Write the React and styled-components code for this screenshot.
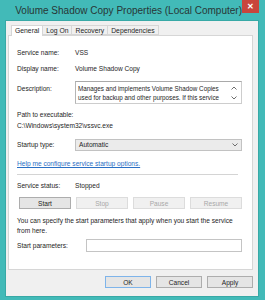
import React from "react";
import styled, { createGlobalStyle } from "styled-components";

const GlobalStyle = createGlobalStyle`
  html, body {
    margin: 0;
    padding: 0;
    background: #42bab8;
  }
  body {
    font-family: "Liberation Sans", Arial, sans-serif;
    font-size: 6.6px;
    color: #1e1e1e;
  }
`;

const Window = styled.div`
  width: 265px;
  height: 300px;
  display: flex;
  flex-direction: column;
  background: #42bab8;
  box-sizing: border-box;
`;

const TitleBar = styled.div`
  height: 21px;
  display: grid;
  grid-template-columns: 1fr auto 1fr;
  align-items: start;
  flex-shrink: 0;
`;

const Title = styled.div`
  grid-column: 2;
  font-size: 10px;
  color: #283636;
  line-height: 21px;
  white-space: nowrap;
`;

const CloseButton = styled.div`
  grid-column: 3;
  justify-self: end;
  margin-right: 6px;
  width: 17px;
  height: 13px;
  background: #c9453c;
  color: #fff;
  display: flex;
  align-items: center;
  justify-content: center;
  font-size: 8px;
  font-weight: bold;
`;

const Client = styled.div`
  flex: 1;
  margin: 0 7px 4px 6px;
  background: #f0f0f0;
  padding: 3px 5px 0 2px;
  display: flex;
  flex-direction: column;
  box-shadow: 0 0 0 1px #38a9a6;
`;

const TabStrip = styled.div`
  display: flex;
  padding-left: 3px;
  height: 11px;
  align-items: flex-end;
`;

const Tab = styled.div`
  height: ${(p) => (p.$active ? 11 : 10)}px;
  box-sizing: border-box;
  padding: 0 3px;
  border: 1px solid #d6d6d6;
  border-bottom: ${(p) => (p.$active ? "none" : "1px solid #d6d6d6")};
  margin-left: ${(p) => (p.$active ? 0 : -1)}px;
  background: ${(p) => (p.$active ? "#fff" : "#f0f0f0")};
  line-height: 9px;
  font-size: 6.8px;
  position: relative;
  z-index: ${(p) => (p.$active ? 1 : 0)};
  margin-bottom: ${(p) => (p.$active ? -1 : 0)}px;
`;

const Panel = styled.div`
  height: 235px;
  box-sizing: border-box;
  background: #fff;
  border: 1px solid #d6d6d6;
  padding: 13px 10px 0 8px;
  display: flex;
  flex-direction: column;
`;

const Row = styled.div`
  display: grid;
  grid-template-columns: ${(p) => p.$label || 58}px 1fr;
  align-items: ${(p) => p.$align || "center"};
  margin-top: ${(p) => p.$gap || 0}px;
  line-height: 8px;
`;

const TopLabel = styled.span`
  padding-top: 4px;
`;

const Line = styled.div`
  line-height: ${(p) => p.$lh || 8}px;
  margin-top: ${(p) => p.$gap || 0}px;
  white-space: nowrap;
`;

const TextArea = styled.div`
  height: 23px;
  box-sizing: border-box;
  border: 1px solid #cdcdcd;
  border-top-color: #a9a9a9;
  border-left-color: #b5b5b5;
  display: flex;
  padding: 2px 2px 0 2px;
`;

const TextAreaBody = styled.div`
  flex: 1;
  font-size: 6.3px;
  line-height: 9px;
  white-space: nowrap;
`;

const ScrollArrows = styled.div`
  width: 10px;
  display: flex;
  flex-direction: column;
  align-items: center;
  justify-content: space-between;
  padding: 2px 0 3px;
`;

const Combo = styled.div`
  height: 12px;
  box-sizing: border-box;
  border: 1px solid #c2c2c2;
  background: #ebebeb;
  display: flex;
  align-items: center;
  justify-content: space-between;
  padding: 0 3px 0 3px;
`;

const Link = styled.div`
  color: #2a6fc4;
  text-decoration: underline;
  line-height: 8px;
  margin-top: 9px;
`;

const Separator = styled.div`
  height: 1px;
  background: #d4d4d4;
  margin: 6px 4px 0 0;
`;

const ButtonRow = styled.div`
  display: flex;
  justify-content: space-between;
  margin-top: ${(p) => p.$gap || 0}px;
  padding: ${(p) => p.$pad || "0"};
`;

const Button = styled.div`
  width: ${(p) => p.$w || 52}px;
  height: 12px;
  box-sizing: border-box;
  border: 1px solid ${(p) => (p.$disabled ? "#dcdcdc" : p.$primary ? "#7eb4ea" : "#adadad")};
  background: ${(p) => (p.$disabled ? "#f0f0f0" : "#e5e5e5")};
  color: ${(p) => (p.$disabled ? "#a8a8a8" : "#1e1e1e")};
  display: flex;
  align-items: center;
  justify-content: center;
`;

const Input = styled.div`
  height: 13px;
  box-sizing: border-box;
  border: 1px solid #c4c4c4;
  background: #fff;
`;

const Footer = styled.div`
  display: flex;
  justify-content: flex-end;
  gap: 5px;
  padding-top: 6px;
`;

const Chevron = ({ up }) => (
  <svg width="6" height="4" viewBox="0 0 6 4">
    <path
      d={up ? "M0.5 3.5 L3 1 L5.5 3.5" : "M0.5 0.5 L3 3 L5.5 0.5"}
      fill="none"
      stroke="#6d6d6d"
      strokeWidth="1"
    />
  </svg>
);

export default function App() {
  return (
    <>
      <GlobalStyle />
      <Window>
        <TitleBar>
          <Title>Volume Shadow Copy Properties (Local Computer)</Title>
          <CloseButton>✕</CloseButton>
        </TitleBar>
        <Client>
          <TabStrip>
            <Tab $active>General</Tab>
            <Tab>Log On</Tab>
            <Tab>Recovery</Tab>
            <Tab>Dependencies</Tab>
          </TabStrip>
          <Panel>
            <Row>
              <span>Service name:</span>
              <span>VSS</span>
            </Row>
            <Row $gap={8}>
              <span>Display name:</span>
              <span>Volume Shadow Copy</span>
            </Row>
            <Row $gap={8} $align="start">
              <TopLabel>Description:</TopLabel>
              <TextArea>
                <TextAreaBody>
                  Manages and implements Volume Shadow Copies
                  <br />
                  used for backup and other purposes. If this service
                </TextAreaBody>
                <ScrollArrows>
                  <Chevron up />
                  <Chevron />
                </ScrollArrows>
              </TextArea>
            </Row>
            <Line $gap={7}>Path to executable:</Line>
            <Line $gap={3}>C:\Windows\system32\vssvc.exe</Line>
            <Row $gap={9}>
              <span>Startup type:</span>
              <Combo>
                <span>Automatic</span>
                <Chevron />
              </Combo>
            </Row>
            <Link>Help me configure service startup options.</Link>
            <Separator />
            <Row $gap={7}>
              <span>Service status:</span>
              <span>Stopped</span>
            </Row>
            <ButtonRow $gap={7} $pad="0 0 0 2px">
              <Button>Start</Button>
              <Button $disabled>Stop</Button>
              <Button $disabled>Pause</Button>
              <Button $disabled>Resume</Button>
            </ButtonRow>
            <Line $gap={7} $lh={10}>
              You can specify the start parameters that apply when you start the service
            </Line>
            <Line $lh={9}>from here.</Line>
            <Row $gap={4} $label={69}>
              <span>Start parameters:</span>
              <Input />
            </Row>
          </Panel>
          <Footer>
            <Button $w={46} $primary>OK</Button>
            <Button $w={46}>Cancel</Button>
            <Button $w={46}>Apply</Button>
          </Footer>
        </Client>
      </Window>
    </>
  );
}
